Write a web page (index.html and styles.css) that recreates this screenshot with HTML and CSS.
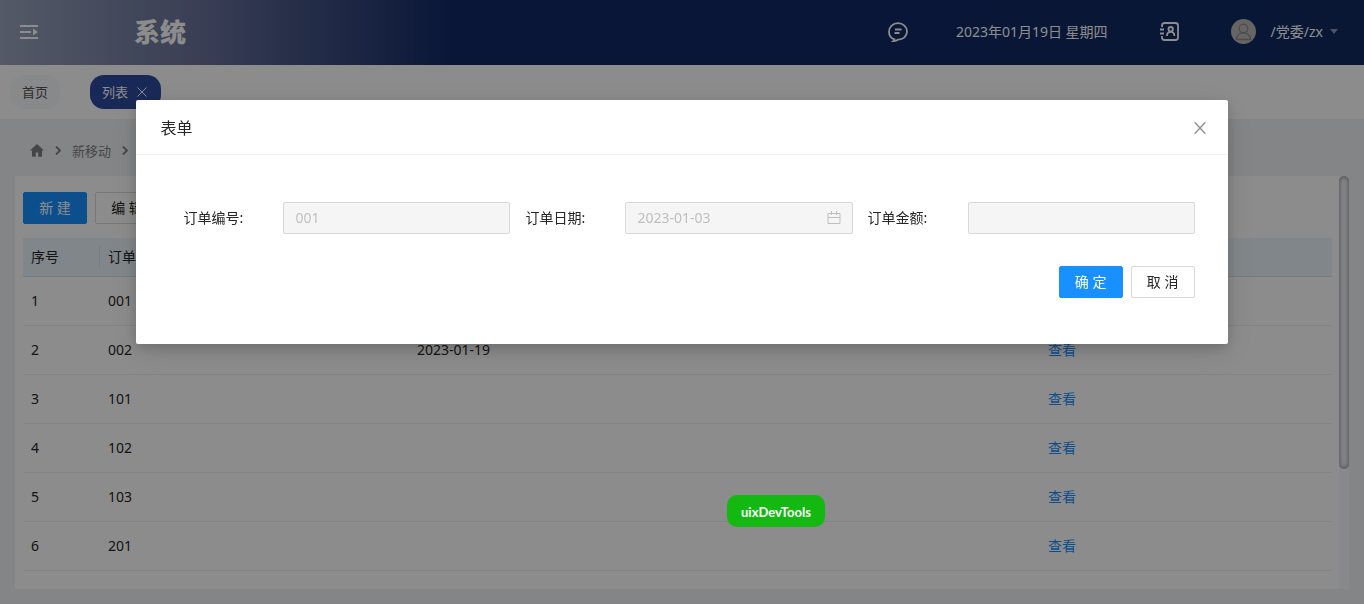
FILE: index.html
```html
<!DOCTYPE html>
<html lang="zh-CN">
<head>
<meta charset="utf-8">
<meta name="viewport" content="width=device-width, initial-scale=1">
<title>系统</title>
<link rel="stylesheet" href="styles.css">
</head>
<body>
<div class="app">
  <header class="topbar">
    <button class="icon-btn menu-btn" type="button" aria-label="展开菜单">
      <svg width="18" height="14" viewBox="0 0 18 14" fill="currentColor"><path d="M0 0h18v2H0zM0 6h11v2H0zM0 12h18v2H0zM13 3.500 18 7l-5 3.500z"/></svg>
    </button>
    <h1 class="brand">系统</h1>
    <button class="icon-btn chat-btn" type="button" aria-label="消息">
      <svg width="20" height="20" viewBox="0 0 20 20" fill="none" stroke="currentColor" stroke-width="1.800"><path d="M5.500 19c.8-.5 1-1 .9-1.700C3.300 16.300 1 13.200 1 9.700 1 4.800 5 1.200 10 1.200s9 3.500 9 8.300-4 8-8.700 8.100c-1.300.9-3 1.500-4.800 1.400z"/><path d="M7 7.500h6.500M6.500 11h5"/></svg>
    </button>
    <span class="today">2023年01月19日 星期四</span>
    <button class="icon-btn book-btn" type="button" aria-label="通讯录">
      <svg width="19" height="19" viewBox="0 0 19 19" fill="none" stroke="currentColor" stroke-width="1.800"><path d="M2 5V3.500Q2 1 4.500 1h11Q18 1 18 3.500v12q0 2.500-2.500 2.500h-11Q2 18 2 15.500V14M0 7.500h4M0 11.500h4"/><circle cx="10.700" cy="7.200" r="2.200"/><path d="M7 14c0-2.600 1.500-4.200 3.700-4.200s3.700 1.600 3.700 4.200"/></svg>
    </button>
    <button class="user" type="button">
      <svg class="avatar" width="25" height="25" viewBox="0 0 25 25" fill="none" stroke="#8a8a8a" stroke-width="1.300"><circle cx="12.500" cy="12.500" r="12.500" fill="#bcb9b6" stroke="none"/><circle cx="12.500" cy="9.500" r="4.300"/><path d="M5.500 20.500c0-4.200 3-6.500 7-6.500s7 2.300 7 6.500z"/></svg>
      <span>/党委/zx</span>
      <svg class="caret" width="8" height="5" viewBox="0 0 8 5" fill="currentColor"><path d="M0 0h8L4 5z"/></svg>
    </button>
  </header>

  <nav class="tabs" aria-label="标签页">
    <a class="tab" href="#home">首页</a>
    <a class="tab active" href="#list">列表
      <svg width="10" height="10" viewBox="0 0 10 10" fill="none" stroke="currentColor"><path d="m.5.5 9 9m0-9-9 9"/></svg>
    </a>
  </nav>

  <nav class="crumbs" aria-label="面包屑">
    <a href="#home" aria-label="首页"><svg width="14" height="13" viewBox="0 0 14 13" fill="currentColor"><path d="M7 0 0 6.500h2V12q0 .8.800.8h3V8.500h2.400v4.300h3q.8 0 .8-.8V6.500h2z"/></svg></a>
    <svg class="sep" width="6" height="9" viewBox="0 0 6 9" fill="none" stroke="currentColor" stroke-width="1.800"><path d="M1 .5l4 4-4 4"/></svg>
    <a href="#mobile">新移动</a>
    <svg class="sep" width="6" height="9" viewBox="0 0 6 9" fill="none" stroke="currentColor" stroke-width="1.800"><path d="M1 .5l4 4-4 4"/></svg>
    <span>列表</span>
  </nav>

  <main class="card">
    <div class="content">
      <div class="toolbar">
        <button class="btn primary" type="button">新 建</button>
        <button class="btn" type="button">编 辑</button>
      </div>
      <table class="grid">
        <colgroup><col class="c-no"><col class="c-code"><col class="c-date"><col class="c-sum"><col class="c-act"></colgroup>
        <thead><tr><th>序号</th><th>订单编号</th><th>订单日期</th><th>订单金额</th><th>操作</th></tr></thead>
        <tbody>
          <tr><td>1</td><td>001</td><td>2023-01-03</td><td></td><td><a href="#1">查看</a></td></tr>
          <tr><td>2</td><td>002</td><td>2023-01-19</td><td></td><td><a href="#2">查看</a></td></tr>
          <tr><td>3</td><td>101</td><td></td><td></td><td><a href="#3">查看</a></td></tr>
          <tr><td>4</td><td>102</td><td></td><td></td><td><a href="#4">查看</a></td></tr>
          <tr><td>5</td><td>103</td><td></td><td></td><td><a href="#5">查看</a></td></tr>
          <tr><td>6</td><td>201</td><td></td><td></td><td><a href="#6">查看</a></td></tr>
        </tbody>
      </table>
    </div>
    <div class="track"><div class="thumb"></div></div>
  </main>
</div>

<div class="mask">
  <section class="modal" role="dialog" aria-modal="true" aria-labelledby="dlg-title">
    <div class="modal-head">
      <h2 id="dlg-title">表单</h2>
      <button class="icon-btn close" type="button" aria-label="关闭">
        <svg width="12" height="12" viewBox="0 0 12 12" fill="none" stroke="currentColor" stroke-width="1.400"><path d="m.7.3 10.600 11.400m0-11.400L.7 11.700"/></svg>
      </button>
    </div>
    <form class="form">
      <div class="fields">
        <div class="field"><label for="code">订单编号:</label><div class="box"><input id="code" type="text" value="001" disabled></div></div>
        <div class="field"><label for="date">订单日期:</label><div class="box date"><input id="date" type="text" value="2023-01-03" disabled>
          <svg width="14" height="14" viewBox="0 0 14 14" fill="none" stroke="currentColor"><path d="M1 2.500h12v10H1zM1 6.500h12M4.500 0v4M9.500 0v4"/></svg></div></div>
        <div class="field"><label for="sum">订单金额:</label><div class="box"><input id="sum" type="text" disabled></div></div>
      </div>
      <div class="actions">
        <button class="btn primary" type="button">确 定</button>
        <button class="btn" type="button">取 消</button>
      </div>
    </form>
  </section>
</div>
<button class="devtools" type="button">uixDevTools</button>
</body>
</html>
```
FILE: styles.css
```css
* { box-sizing: border-box; }

body {
  margin: 0;
  color: #262626;
  background: #f0f2f5;
  font: 14px/22px "Noto Sans", "Noto Sans CJK SC", sans-serif;
}

button, input { font: inherit; color: inherit; }
button { cursor: pointer; }
a { color: inherit; text-decoration: none; }
svg { display: block; flex: none; }
h1, h2 { margin: 0; }

.app {
  display: flex;
  flex-direction: column;
  height: 100vh;
}

.icon-btn {
  display: flex;
  padding: 0;
  border: 0;
  background: none;
}

/* Top bar */
.topbar {
  display: flex;
  align-items: center;
  flex: none;
  height: 65px;
  padding: 0 26px 2px 20px;
  color: #fff;
  background: linear-gradient(90deg, #9ba4bd 0, #7c88a8 110px, #6a739c 200px, #455484 300px, #2b3f76 380px, #122866 455px, #122a62 100%);
}
.brand {
  margin: 0 auto 0 96px;
  font-size: 26px;
  line-height: 32px;
  font-weight: 900;
}
.today { margin: 0 52px 0 48px; }
.user {
  display: flex;
  align-items: center;
  margin-left: 52px;
  padding: 0;
  border: 0;
  background: none;
}
.avatar { margin-right: 15px; }
.caret { margin-left: 7px; color: #8d97b3; }

/* Page tabs */
.tabs {
  display: flex;
  align-items: center;
  flex: none;
  gap: 30px;
  height: 54px;
  padding: 0 10px;
  background: #fff;
}
.tab {
  display: flex;
  align-items: center;
  gap: 9px;
  height: 34px;
  padding: 0 12px;
  border-radius: 14px;
  font-size: 13px;
  color: #555;
  background: #f8f9fb;
}
.tab.active { padding: 0 14px 0 12px; color: #fff; background: #2f4b9f; }

/* Breadcrumb */
.crumbs {
  display: flex;
  align-items: center;
  flex: none;
  gap: 11px;
  height: 57px;
  padding: 6px 30px 0;
  font-size: 13px;
  color: #808080;
}

/* List card */
.card {
  display: flex;
  flex: 1;
  min-height: 0;
  margin: 0 15px 15px;
  background: #fff;
}
.content {
  flex: 1;
  padding: 16px 7px 0 8px;
  overflow: hidden;
}
.toolbar { display: flex; gap: 8px; margin-bottom: 14px; }
.track { width: 10px; background: #f8f9fb; }
.thumb {
  height: 71%;
  border-radius: 5px;
  background: #f0f2f5;
  box-shadow: inset 0 0 5px rgba(0, 0, 0, .5);
}

.btn {
  width: 64px;
  height: 32px;
  padding: 0;
  border: 1px solid #d9d9d9;
  border-radius: 2px;
  background: #fff;
}
.btn.primary { color: #fff; border-color: #1890ff; background: #1890ff; }

.grid {
  width: 100%;
  table-layout: fixed;
  border-collapse: separate;
  border-spacing: 0;
}
.c-no { width: 77px; }
.c-code, .c-date { width: 309px; }
.c-act { width: 292px; }
.grid th, .grid td {
  height: 49px;
  padding: 0 8px;
  border-bottom: 1px solid #f0f0f0;
  text-align: left;
  font-weight: 400;
}
.grid th {
  height: 39px;
  border-bottom-color: #d5e0e8;
  background: linear-gradient(#d9e3eb, #d9e3eb) right center / 1px 22px no-repeat #ecf5fc;
}
.grid th:last-child { background: #ecf5fc; }
.grid td a { color: #1890ff; }

/* Dialog */
.mask {
  position: fixed;
  inset: 0;
  padding-top: 100px;
  background: rgba(0, 0, 0, .45);
}
.modal {
  width: 80%;
  margin: 0 auto;
  border-radius: 2px;
  background: #fff;
  box-shadow: 0 4px 12px rgba(0, 0, 0, .15), 0 8px 32px rgba(0, 0, 0, .12);
}
.modal-head {
  display: flex;
  align-items: center;
  justify-content: space-between;
  height: 55px;
  padding: 1px 22px 0 24px;
  border-bottom: 1px solid #f0f0f0;
}
.modal-head h2 { font-size: 16px; font-weight: 400; }
.close { color: #8c8c8c; }
.form { padding: 47px 33px 46px 47px; }
.fields {
  display: grid;
  grid-template-columns: repeat(3, minmax(0, 1fr));
  gap: 15px;
}
.field { display: flex; align-items: center; }
.field label { flex: none; width: 100px; }
.box {
  display: flex;
  align-items: center;
  flex: 1;
  min-width: 0;
  height: 32px;
  padding: 0 11px;
  border: 1px solid #d9d9d9;
  border-radius: 2px;
  color: #bfbfbf;
  background: #f5f5f5;
}
.box input {
  flex: 1;
  width: 100%;
  min-width: 0;
  padding: 0;
  border: 0;
  background: none;
}
.actions {
  display: flex;
  justify-content: flex-end;
  gap: 8px;
  margin-top: 32px;
}

.devtools {
  position: fixed;
  left: 727px;
  top: 495px;
  height: 32px;
  padding: 2px 14px 0;
  border: 0;
  border-radius: 10px;
  color: #fff;
  background: #13b911;
  font: 700 13px/20px Lato, sans-serif;
}
```
